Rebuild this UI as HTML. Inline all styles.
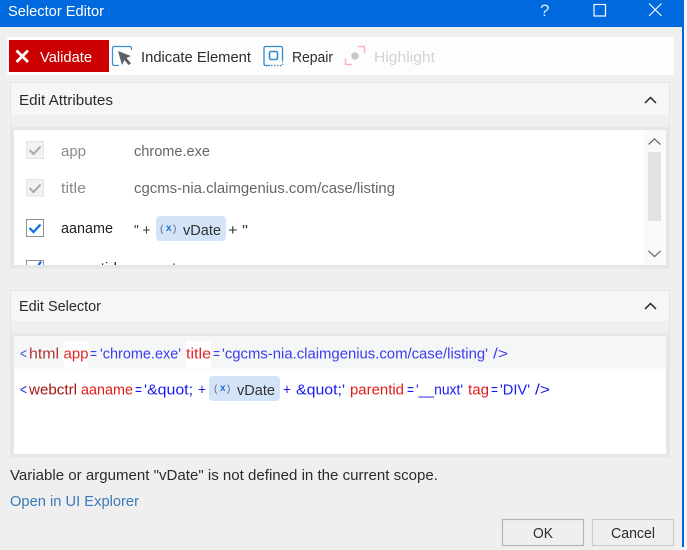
<!DOCTYPE html>
<html lang="en">
<head>
<meta charset="utf-8">
<title>Selector Editor</title>
<style>
html,body{margin:0;padding:0;width:687px;height:550px;overflow:hidden;background:#f0f0f0}
svg{display:block;position:absolute;left:0;top:0}
text{font-family:"Liberation Sans",sans-serif;font-size:15px;white-space:pre}
</style>
</head>
<body>
<svg width="687" height="550" viewBox="0 0 687 550" xmlns="http://www.w3.org/2000/svg">
  <rect width="687" height="550" fill="#efefef"/>
  <rect x="682" y="0" width="2" height="547" fill="#0069de"/>
  <rect x="684" y="0" width="3" height="550" fill="#f4f4f4"/>
  <rect x="0" y="0" width="684" height="27" fill="#0069de"/>
  <text x="8" y="16" fill="#fff" textLength="96" lengthAdjust="spacingAndGlyphs">Selector Editor</text>
  <text x="540" y="16" fill="#dbe9fb" style="font-size:17px">?</text>
  <rect x="594" y="4.500" width="11.500" height="11.500" fill="none" stroke="#fff" stroke-width="1.200"/>
  <path d="M649 3.500L661.500 16M661.500 3.500L649 16" stroke="#fff" stroke-width="1.100" fill="none"/>

  <!-- toolbar -->
  <rect x="7" y="37" width="667" height="38" fill="#fdfdfd"/>
  <rect x="9" y="40" width="100" height="32" fill="#cc0000"/>
  <path d="M16.500 50.500L28 62M28 50.500L16.500 62" stroke="#fff" stroke-width="2.800" fill="none"/>
  <text x="40" y="62" fill="#fff" textLength="52" lengthAdjust="spacingAndGlyphs">Validate</text>

  <path d="M119 65.500H114a1.500 1.500 0 0 1-1.500-1.500V48a1.500 1.500 0 0 1 1.500-1.500H130a1.500 1.500 0 0 1 1.500 1.500V50" fill="none" stroke="#3b8fd0" stroke-width="1.200"/>
  <path d="M118 51L131 56L126.500 58L131 63.500L128.500 65L124.500 60L122 65Z" fill="#5c6066"/>
  <text x="141" y="62" fill="#2d2d2d" textLength="110" lengthAdjust="spacingAndGlyphs">Indicate Element</text>

  <path d="M282.500 60V48a1.500 1.500 0 0 0-1.500-1.500H265.500a1.500 1.500 0 0 0-1.500 1.500V64a1.500 1.500 0 0 0 1.500 1.500H270" fill="none" stroke="#2f8bd0" stroke-width="1.300"/>
  <path d="M271 65.500H282.500V60" fill="none" stroke="#2f8bd0" stroke-width="1.200" stroke-dasharray="1.500 1.500"/>
  <rect x="269.500" y="51.500" width="8" height="8" rx="1.500" fill="none" stroke="#2f8bd0" stroke-width="1.600"/>
  <text x="292" y="62" fill="#2d2d2d" textLength="41" lengthAdjust="spacingAndGlyphs">Repair</text>

  <path d="M345.500 58.500V64.500H352M358 46.500H364.500V53" fill="none" stroke="#f7b3ba" stroke-width="1.500"/>
  <circle cx="355" cy="56" r="3.800" fill="#c9c9c9"/>
  <text x="374" y="62" fill="#d3d3d3" textLength="61" lengthAdjust="spacingAndGlyphs">Highlight</text>

  <!-- attributes panel -->
  <rect x="10.500" y="82.500" width="659" height="185.500" fill="#efefef" stroke="#e6e6e6"/>
  <rect x="11" y="83" width="658" height="32" fill="#f5f6f6"/>
  <text x="19" y="105" fill="#2b2b2b" textLength="94" lengthAdjust="spacingAndGlyphs">Edit Attributes</text>
  <path d="M645 103L650.500 97.500L656 103" fill="none" stroke="#222" stroke-width="1.500"/>
  <rect x="11" y="127" width="658" height="141" fill="#e6e6e6"/>
  <rect x="14" y="130" width="652" height="135" fill="#fff"/>

  <rect x="26.500" y="141.500" width="17" height="17" fill="#f2f2f2" stroke="#e3e3e3"/>
  <path d="M29.500 150L33.500 154L40.500 146.500" fill="none" stroke="#a8a8a8" stroke-width="2"/>
  <text x="61" y="156" fill="#8a8a8a" textLength="25" lengthAdjust="spacingAndGlyphs">app</text>
  <text x="134" y="156" fill="#666" textLength="76" lengthAdjust="spacingAndGlyphs">chrome.exe</text>

  <rect x="26.500" y="179.500" width="17" height="16.500" fill="#f2f2f2" stroke="#e3e3e3"/>
  <path d="M29.500 188L33.500 192L40.500 184.500" fill="none" stroke="#a8a8a8" stroke-width="2"/>
  <text x="61" y="193" fill="#8a8a8a" textLength="25" lengthAdjust="spacingAndGlyphs">title</text>
  <text x="134" y="193" fill="#666" textLength="261" lengthAdjust="spacingAndGlyphs">cgcms-nia.claimgenius.com/case/listing</text>

  <rect x="26.500" y="219.500" width="17" height="17" fill="#fff" stroke="#8f8f8f"/>
  <path d="M29.500 228L33.500 232L40.500 224.500" fill="none" stroke="#0a6fe0" stroke-width="2.200"/>
  <text x="61" y="233" fill="#222" textLength="52" lengthAdjust="spacingAndGlyphs">aaname</text>
  <text x="134" y="235" fill="#333" textLength="20" lengthAdjust="spacingAndGlyphs">" + </text>
  <rect x="156" y="216" width="70" height="25" rx="4" fill="#d3e4f8"/>
  <text x="160" y="232" fill="#5a6a80" style="font-size:10px">(</text>
  <text x="166" y="231" fill="#1c6fd6" style="font-size:10px;font-weight:bold">x</text>
  <text x="173" y="232" fill="#5a6a80" style="font-size:10px">)</text>
  <text x="183" y="235" fill="#333" textLength="38" lengthAdjust="spacingAndGlyphs">vDate</text>
  <text x="228" y="235" fill="#333" textLength="20" lengthAdjust="spacingAndGlyphs">+ "</text>

  <clipPath id="cl"><rect x="14" y="255" width="630" height="10"/></clipPath>
  <g clip-path="url(#cl)">
    <rect x="26.500" y="260.500" width="17" height="17" fill="#fff" stroke="#8f8f8f"/>
    <path d="M29.500 269L33.500 273L41 261.500" fill="none" stroke="#0a6fe0" stroke-width="2.200"/>
    <text x="61" y="273" fill="#222" textLength="56" lengthAdjust="spacingAndGlyphs">parentid</text>
    <text x="134" y="273" fill="#333" textLength="42" lengthAdjust="spacingAndGlyphs">__nuxt</text>
  </g>

  <rect x="644" y="130" width="22" height="135" fill="#fafafa"/>
  <rect x="648" y="152" width="13" height="69" fill="#e1e2e3"/>
  <path d="M648.500 144.500L654.500 139L660.500 144.500" fill="none" stroke="#777" stroke-width="1.400"/>
  <path d="M648.500 251L654.500 256.500L660.500 251" fill="none" stroke="#777" stroke-width="1.400"/>

  <!-- selector panel -->
  <rect x="10.500" y="290.500" width="659" height="166" fill="#efefef" stroke="#e6e6e6"/>
  <rect x="11" y="291" width="658" height="30" fill="#f5f6f6"/>
  <text x="19" y="311" fill="#2b2b2b" textLength="82" lengthAdjust="spacingAndGlyphs">Edit Selector</text>
  <path d="M645 309L650.500 303.500L656 309" fill="none" stroke="#222" stroke-width="1.500"/>
  <rect x="11" y="333" width="658" height="124" fill="#e6e6e6"/>
  <rect x="14" y="336" width="652" height="118" fill="#fff"/>
  <rect x="14" y="336" width="652" height="32.500" fill="#f5f6f6"/>
  <rect x="63.500" y="341" width="25" height="27" fill="#fff"/>
  <rect x="186" y="341" width="25" height="27" fill="#fff"/>

  <g>
    <text x="20" y="358.500" fill="#4a4af0" textLength="7" lengthAdjust="spacingAndGlyphs">&lt;</text>
    <text x="29" y="358.500" fill="#b03838" textLength="30" lengthAdjust="spacingAndGlyphs">html</text>
    <text x="63.500" y="358.500" fill="#e02a2a" textLength="25" lengthAdjust="spacingAndGlyphs">app</text>
    <text x="90" y="358.500" fill="#3c3cf0" textLength="7" lengthAdjust="spacingAndGlyphs">=</text>
    <text x="100" y="358.500" fill="#3c3cf0" textLength="81" lengthAdjust="spacingAndGlyphs">'chrome.exe'</text>
    <text x="186" y="358.500" fill="#e02a2a" textLength="25" lengthAdjust="spacingAndGlyphs">title</text>
    <text x="213" y="358.500" fill="#3c3cf0" textLength="7" lengthAdjust="spacingAndGlyphs">=</text>
    <text x="222" y="358.500" fill="#3c3cf0" textLength="266" lengthAdjust="spacingAndGlyphs">'cgcms-nia.claimgenius.com/case/listing'</text>
    <text x="493" y="358.500" fill="#3c3cf0" textLength="15" lengthAdjust="spacingAndGlyphs">/&gt;</text>

    <text x="20" y="394.500" fill="#2020f0" textLength="7" lengthAdjust="spacingAndGlyphs">&lt;</text>
    <text x="29" y="394.500" fill="#a31515" textLength="48" lengthAdjust="spacingAndGlyphs">webctrl</text>
    <text x="81" y="394.500" fill="#e01a1a" textLength="52" lengthAdjust="spacingAndGlyphs">aaname</text>
    <text x="135" y="394.500" fill="#1a1af0" textLength="7" lengthAdjust="spacingAndGlyphs">=</text>
    <text x="144" y="394.500" fill="#1a1af0" textLength="49" lengthAdjust="spacingAndGlyphs">'&amp;quot;</text>
    <text x="198" y="394.500" fill="#1a1af0" textLength="8" lengthAdjust="spacingAndGlyphs">+</text>
    <rect x="209" y="376" width="71" height="25" rx="4" fill="#d3e4f8"/>
    <text x="214" y="392" fill="#5a6a80" style="font-size:10px">(</text>
    <text x="220" y="391" fill="#1c6fd6" style="font-size:10px;font-weight:bold">x</text>
    <text x="227" y="392" fill="#5a6a80" style="font-size:10px">)</text>
    <text x="237" y="395" fill="#333" textLength="38" lengthAdjust="spacingAndGlyphs">vDate</text>
    <text x="283" y="394.500" fill="#1a1af0" textLength="8" lengthAdjust="spacingAndGlyphs">+</text>
    <text x="296" y="394.500" fill="#1a1af0" textLength="49" lengthAdjust="spacingAndGlyphs">&amp;quot;'</text>
    <text x="350" y="394.500" fill="#e01a1a" textLength="54" lengthAdjust="spacingAndGlyphs">parentid</text>
    <text x="407" y="394.500" fill="#1a1af0" textLength="7" lengthAdjust="spacingAndGlyphs">=</text>
    <text x="416" y="394.500" fill="#1a1af0" textLength="47" lengthAdjust="spacingAndGlyphs">'__nuxt'</text>
    <text x="468" y="394.500" fill="#e01a1a" textLength="21" lengthAdjust="spacingAndGlyphs">tag</text>
    <text x="491" y="394.500" fill="#1a1af0" textLength="7" lengthAdjust="spacingAndGlyphs">=</text>
    <text x="500" y="394.500" fill="#1a1af0" textLength="30" lengthAdjust="spacingAndGlyphs">'DIV'</text>
    <text x="535" y="394.500" fill="#1a1af0" textLength="15" lengthAdjust="spacingAndGlyphs">/&gt;</text>
  </g>

  <!-- footer -->
  <text x="10" y="480" fill="#2b2b2b" textLength="428" lengthAdjust="spacingAndGlyphs">Variable or argument "vDate" is not defined in the current scope.</text>
  <text x="10" y="506" fill="#3a7ab8" textLength="129" lengthAdjust="spacingAndGlyphs">Open in UI Explorer</text>

  <rect x="502.500" y="519.500" width="81" height="26" fill="#efefef" stroke="#b5b5b5" stroke-width="1.200"/>
  <text x="533" y="538" fill="#2b2b2b" textLength="20" lengthAdjust="spacingAndGlyphs">OK</text>
  <rect x="592.500" y="519.500" width="81" height="26" fill="#efefef" stroke="#cbcbcb" stroke-width="1.200"/>
  <text x="611" y="538" fill="#2b2b2b" textLength="44" lengthAdjust="spacingAndGlyphs">Cancel</text>
</svg>
</body>
</html>
